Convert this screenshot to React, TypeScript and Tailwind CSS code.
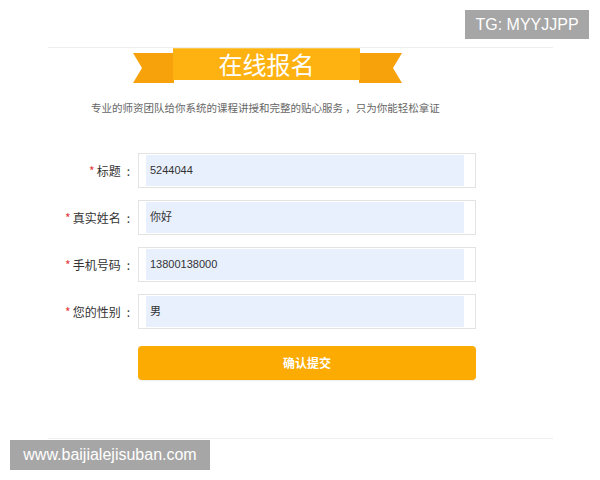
import React from 'react';

const fields = [
  { label: '标题', value: '5244044' },
  { label: '真实姓名', value: '你好' },
  { label: '手机号码', value: '13800138000' },
  { label: '您的性别', value: '男' },
];

function Ribbon() {
  return (
    <div className="relative ml-[85px] w-[269px] h-[35px]">
      <svg width="269" height="35" viewBox="0 0 269 35" className="absolute inset-0">
        <polygon points="0,5 41,5 41,35 0,35 9,20" fill="#f7a10b" />
        <polygon points="226,5 269,5 260,20 269,35 226,35" fill="#f7a10b" />
        <rect x="40" y="0" width="187" height="32" fill="#fdb211" />
        <rect x="40" y="0" width="187" height="1" fill="#fdc84a" />
      </svg>
      <div className="absolute left-[40px] top-0 w-[187px] h-[32px] flex items-center justify-center text-white text-[24px] leading-none font-['Noto_Sans_CJK_SC',sans-serif]">
        在线报名
      </div>
    </div>
  );
}

export default function App() {
  return (
    <div className="relative w-[600px] h-[480px] bg-white overflow-hidden font-['Liberation_Sans','Noto_Sans_CJK_SC',sans-serif]">
      <div className="pt-[47px] ml-[48px] w-[505px]">
        <div className="border-t border-[#eeeeee]">
          <Ribbon />
          <p className="mt-[17px] ml-[43px] text-[10.5px] leading-[16px] text-[#666666] whitespace-nowrap font-['Noto_Sans_CJK_SC',sans-serif]">
            专业的师资团队给你系统的课程讲授和完整的贴心服务 ，只为你能轻松拿证
          </p>
          <div className="mt-[37px] flex flex-col gap-[12px]">
            {fields.map((f) => (
              <div key={f.label} className="flex items-center h-[35px]">
                <div className="w-[82px] text-right text-[12px] text-[#333333] font-['Noto_Sans_CJK_SC',sans-serif] whitespace-nowrap">
                  <span className="text-[#e4393c] mr-[2px]">*</span>
                  {f.label}
                  <span className="ml-[6px]">:</span>
                </div>
                <div className="ml-[8px] w-[338px] h-[35px] border border-[#e3e3e3] bg-white flex pl-[7px] pr-[11px] py-px">
                  <div className="flex-1 bg-[#e8f0fe] flex items-center pl-[4px] text-[11px] text-[#333333]">
                    {f.value}
                  </div>
                </div>
              </div>
            ))}
            <div className="flex mt-[5px]">
              <div className="ml-[90px] w-[338px] h-[34px] rounded-[4px] bg-[#fcab03] flex items-center justify-center text-white text-[12px] font-bold font-['Noto_Sans_CJK_SC',sans-serif] shadow-[0_1px_1px_rgba(0,0,0,0.08)]">
                确认提交
              </div>
            </div>
          </div>
          <div className="mt-[58px] border-t border-[#eeeeee]" />
        </div>
      </div>
      <div className="absolute left-[465px] top-[10px] w-[124px] h-[29px] bg-[#a6a6a6] text-white text-[16px] flex items-center justify-center">
        TG: MYYJJPP
      </div>
      <div className="absolute left-[10px] top-[440px] w-[200px] h-[30px] bg-[#a6a6a6] text-white text-[16px] flex items-center justify-center">
        www.baijialejisuban.com
      </div>
    </div>
  );
}
